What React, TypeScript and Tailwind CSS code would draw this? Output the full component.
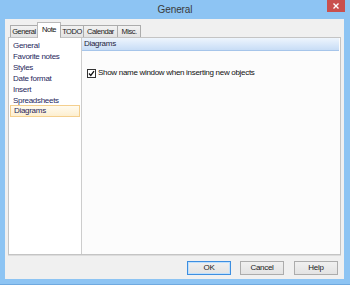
import React from "react";

const tabs = [
  { label: "General", w: "w-[28px]" },
  { label: "Note", w: "w-[24px]", active: true },
  { label: "TODO", w: "w-[24px]" },
  { label: "Calendar", w: "w-[35px]" },
  { label: "Misc.", w: "w-[24px]" },
];

const items = ["General", "Favorite notes", "Styles", "Date format", "Insert", "Spreadsheets", "Diagrams"];

export default function App() {
  return (
    <div className="w-[350px] h-[285px] bg-[#8dc4f3] flex flex-col overflow-hidden border-b border-[#6fa9df] font-['Liberation_Sans',Arial,sans-serif] text-[8px] tracking-[-0.3px] text-[#1e1e1e]">
      {/* Title bar */}
      <div className="relative h-[19px] shrink-0 flex items-center justify-center">
        <span className="text-[10px] tracking-[-0.1px] text-[#3a3a3a] leading-none mt-[1px]">General</span>
        <div className="absolute top-0 right-[5px] w-[18px] h-[12px] bg-[#c9504e] flex items-center justify-center">
          <svg width="6" height="6" viewBox="0 0 6 6">
            <path d="M0.5 0.5 L5.5 5.5 M5.5 0.5 L0.5 5.5" stroke="#ffffff" strokeWidth="1.4" />
          </svg>
        </div>
      </div>

      {/* Client area */}
      <div className="flex-1 ml-[5px] mr-[6px] mb-[5px] bg-[#f0f0f0] flex flex-col">
        {/* Tabs */}
        <div className="relative z-10 flex items-end h-[18px] pt-[3px] pl-[5px] text-[7.5px] tracking-[-0.45px]">
          {tabs.map((t, i) =>
            t.active ? (
              <div
                key={t.label}
                className={`${t.w} h-[16px] -mb-[1px] -ml-[1px] bg-white border border-b-0 border-[#b9b9b9] flex items-center justify-center text-[#111] pb-[1px] whitespace-nowrap`}
              >
                {t.label}
              </div>
            ) : (
              <div
                key={t.label}
                className={`${t.w} h-[12px] ${i === 0 ? "" : "-ml-[1px]"} bg-gradient-to-b from-[#f2f2f2] to-[#e3e3e3] border border-b-0 border-[#acacac] flex items-center justify-center text-[#222] whitespace-nowrap overflow-hidden`}
              >
                {t.label}
              </div>
            )
          )}
        </div>

        {/* Page */}
        <div className="mx-[3px] h-[218px] border border-[#c4c4c4] flex bg-[#fcfcfc] shadow-[0_1px_0_#dcdcdc]">
          <div className="w-[73px] bg-white border-r border-[#cdcdcd] pt-[2px] flex flex-col">
            {items.map((it) =>
              it === "Diagrams" ? (
                <div
                  key={it}
                  className="mx-[1px] h-[12px] -mt-[1px] pl-[3px] flex items-center bg-gradient-to-b from-[#fffbf0] to-[#fdefd0] border border-[#f4cf8e] text-[#1f1f5c]"
                >
                  {it}
                </div>
              ) : (
                <div key={it} className="h-[11px] pl-[4px] flex items-center text-[#1f1f5c]">
                  {it}
                </div>
              )
            )}
          </div>
          <div className="flex-1 flex flex-col mr-[1px]">
            <div className="h-[13px] bg-gradient-to-b from-[#eef5fd] to-[#c8ddf6] border-b border-[#a6c5ea] pl-[2px] flex items-center text-[#1e2440]">
              Diagrams
            </div>
            <div className="mt-[16px] pl-[5px] flex items-center">
              <div className="w-[9px] h-[9px] bg-white border border-[#333] flex items-center justify-center">
                <svg width="7" height="7" viewBox="0 0 7 7">
                  <path d="M1 3.5 L2.8 5.4 L6 1.2" stroke="#111" strokeWidth="1.3" fill="none" />
                </svg>
              </div>
              <span className="ml-[2px] text-[#111]">Show name window when inserting new objects</span>
            </div>
          </div>
        </div>

        {/* Buttons */}
        <div className="flex justify-end mt-[6px] mr-[6px] gap-[9px]">
          <button className="w-[44px] h-[14px] border border-[#3d8ee0] bg-gradient-to-b from-[#f0f0f0] to-[#e3e3e3] flex items-center justify-center text-[#222] shadow-[inset_0_0_0_1px_#bfe0fd]">
            OK
          </button>
          <button className="w-[44px] h-[14px] border border-[#acacac] bg-gradient-to-b from-[#f0f0f0] to-[#e3e3e3] flex items-center justify-center text-[#222]">
            Cancel
          </button>
          <button className="w-[44px] h-[14px] ml-[1px] border border-[#acacac] bg-gradient-to-b from-[#f0f0f0] to-[#e3e3e3] flex items-center justify-center text-[#222]">
            Help
          </button>
        </div>
      </div>
    </div>
  );
}
